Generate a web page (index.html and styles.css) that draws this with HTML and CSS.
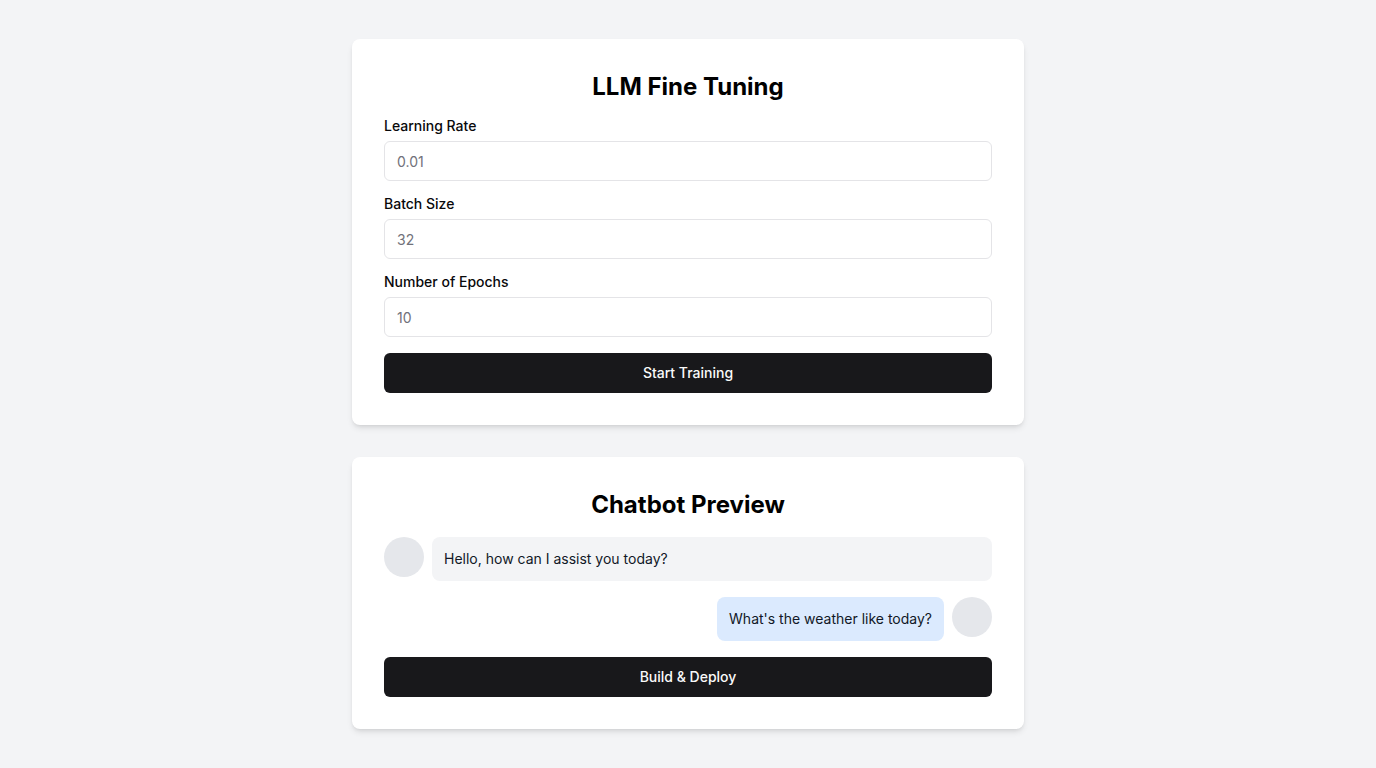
FILE: index.html
```html
<!DOCTYPE html>
<html lang="en">
<head>
<meta charset="utf-8">
<title>LLM Fine Tuning</title>
<link rel="stylesheet" href="styles.css">
</head>
<body>
<main class="page">
  <section class="card">
    <h1 class="card-title">LLM Fine Tuning</h1>
    <form class="form">
      <div class="field">
        <label class="label" for="lr">Learning Rate</label>
        <input class="input" id="lr" type="text" placeholder="0.01">
      </div>
      <div class="field">
        <label class="label" for="bs">Batch Size</label>
        <input class="input" id="bs" type="text" placeholder="32">
      </div>
      <div class="field">
        <label class="label" for="ep">Number of Epochs</label>
        <input class="input" id="ep" type="text" placeholder="10">
      </div>
      <button class="btn" type="button">Start Training</button>
    </form>
  </section>

  <section class="card">
    <h1 class="card-title">Chatbot Preview</h1>
    <div class="chat">
      <div class="msg msg-bot">
        <div class="avatar"></div>
        <div class="bubble bubble-bot">Hello, how can I assist you today?</div>
      </div>
      <div class="msg msg-user">
        <div class="bubble bubble-user">What's the weather like today?</div>
        <div class="avatar"></div>
      </div>
    </div>
    <button class="btn" type="button">Build &amp; Deploy</button>
  </section>
</main>
</body>
</html>
```
FILE: styles.css
```css
* { box-sizing: border-box; }
html, body { margin: 0; padding: 0; }
body {
  background: #f3f4f6;
  font-family: Inter, "Noto Sans", "Liberation Sans", sans-serif;
  color: #09090b;
}
.page {
  min-height: 100vh;
  display: flex;
  flex-direction: column;
  align-items: center;
  justify-content: center;
  gap: 32px;
}
.card {
  width: 672px;
  background: #fff;
  border-radius: 8px;
  padding: 32px;
  box-shadow: 0 4px 6px -1px rgba(0,0,0,0.1), 0 2px 4px -2px rgba(0,0,0,0.1);
}
.card-title {
  margin: 0 0 13px;
  font-size: 24px;
  line-height: 32px;
  font-weight: 700;
  text-align: center;
  color: #000;
}
.form {
  display: flex;
  flex-direction: column;
  gap: 13px;
  margin: 0;
}
.field {
  display: flex;
  flex-direction: column;
  gap: 5px;
}
.label {
  font-size: 14px;
  line-height: 20px;
  font-weight: 500;
  color: #09090b;
}
.input {
  height: 40px;
  width: 100%;
  border: 1px solid #e4e4e7;
  border-radius: 6px;
  padding: 0 12px;
  font-family: inherit;
  font-size: 14px;
  background: #fff;
  outline: none;
}
.input::placeholder { color: #71717a; }
.btn {
  height: 40px;
  width: 100%;
  border: none;
  border-radius: 6px;
  background: #18181b;
  color: #fafafa;
  font-family: inherit;
  font-size: 14px;
  font-weight: 500;
  padding: 0 0 2px;
  cursor: pointer;
}
.form .btn { margin-top: 3px; }
.chat {
  display: flex;
  flex-direction: column;
  gap: 16px;
  margin: 16px 0 16px;
}
.msg {
  display: flex;
  align-items: flex-start;
  gap: 8px;
}
.msg-user { justify-content: flex-end; }
.avatar {
  width: 40px;
  height: 40px;
  border-radius: 50%;
  background: #e5e7eb;
  flex-shrink: 0;
}
.bubble {
  padding: 12px;
  border-radius: 8px;
  font-size: 14px;
  line-height: 20px;
  color: #111827;
}
.bubble-bot { flex: 1; background: #f3f4f6; }
.bubble-user { background: #dbeafe; }
.card:last-child .card-title { margin-bottom: 0; }
```
